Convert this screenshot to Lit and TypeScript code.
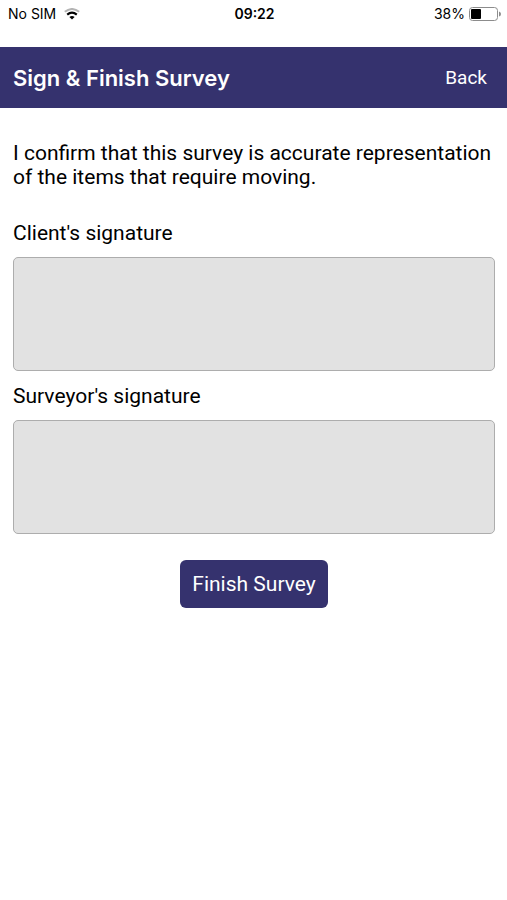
import { LitElement, html, css } from "lit";
import { customElement } from "lit/decorators.js";

@customElement("app-root")
export class AppRoot extends LitElement {
  static styles = css`
    :host {
      display: block;
      min-height: 100vh;
      background: #fff;
      color: #000;
      font-family: Roboto, "Liberation Sans", sans-serif;
      font-size: 21px;
      line-height: 24px;
    }
    .status {
      display: grid;
      grid-template-columns: 1fr auto 1fr;
      align-items: center;
      height: 27px;
      padding: 0 6px 0 8px;
      margin-bottom: 20px;
      font-family: Inter, "Liberation Sans", sans-serif;
      font-size: 14px;
      line-height: 20px;
    }
    .carrier, .power { display: flex; align-items: center; gap: 8px; }
    .power { justify-content: flex-end; gap: 4px; }
    .time { font-weight: 600; }
    .wifi, .battery { display: block; }
    .bar {
      display: flex;
      align-items: center;
      justify-content: space-between;
      height: 61px;
      padding: 0 20px 0 13px;
      background: #35326e;
      color: #fff;
    }
    h1 {
      margin: 0;
      font-family: Inter, "Liberation Sans", sans-serif;
      font-size: 22px;
      font-weight: 600;
      line-height: 28px;
    }
    .back { color: #fff; font-size: 19px; text-decoration: none; }
    form { padding: 33px 12px 24px 13px; }
    .confirm { margin: 0 0 32px; }
    label { display: block; }
    .pad {
      display: block;
      box-sizing: border-box;
      width: 100%;
      height: 114px;
      margin: 12px 0 13px;
      padding: 8px;
      border: 1px solid #adadad;
      border-radius: 5px;
      background: #e2e2e2;
      font: inherit;
      resize: none;
    }
    .finish {
      display: block;
      margin: 26px auto 0;
      padding: 12px;
      border: 0;
      border-radius: 6px;
      background: #35326e;
      color: #fff;
      font: inherit;
    }
  `;

  render() {
    return html`
      <div class="status">
        <div class="carrier">
          <span>No SIM</span>
          <svg class="wifi" width="16" height="12" viewBox="0 0 16 12" aria-hidden="true">
            <path d="M.8 3.8Q8-1.8 15.2 3.8" fill="none" stroke="#b4b4b4" stroke-width="2"/>
            <path d="M3.2 6.6Q8 2.8 12.8 6.6" fill="none" stroke="#000" stroke-width="2.2"/>
            <path d="M5.4 8.9Q8 6.9 10.6 8.9L8 11.4Z"/>
          </svg>
        </div>
        <span class="time">09:22</span>
        <div class="power">
          <span>38%</span>
          <svg class="battery" width="32" height="14" viewBox="0 0 32 14" aria-hidden="true">
            <rect x=".5" y=".5" width="28" height="13" rx="3" fill="#fff" stroke="#8c8c8c"/>
            <rect x="2" y="2" width="10" height="10" rx="1"/>
            <path d="M30 4.5Q32 5 32 7T30 9.5Z" fill="#8c8c8c"/>
          </svg>
        </div>
      </div>
      <header class="bar">
        <h1>Sign &amp; Finish Survey</h1>
        <a class="back" href="#">Back</a>
      </header>
      <form>
        <p class="confirm">I confirm that this survey is accurate representation of the items that require moving.</p>
        <label for="client">Client's signature</label>
        <textarea class="pad" id="client"></textarea>
        <label for="surveyor">Surveyor's signature</label>
        <textarea class="pad" id="surveyor"></textarea>
        <button class="finish" type="button">Finish Survey</button>
      </form>
    `;
  }
}
